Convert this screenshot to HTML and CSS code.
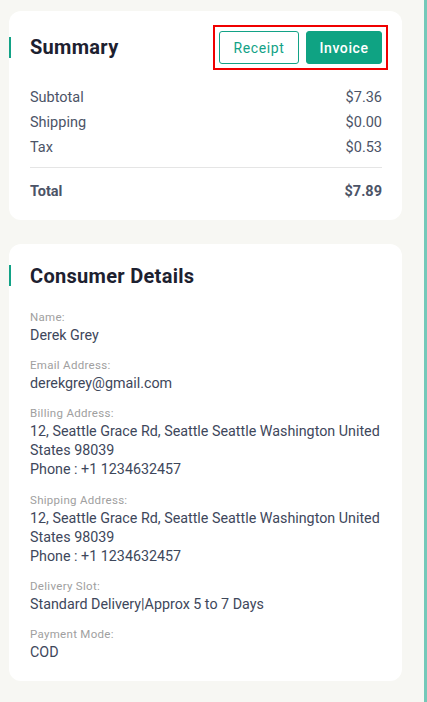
FILE: index.html
```html
<!DOCTYPE html>
<html lang="en">
<head>
<meta charset="utf-8">
<title>Order Summary</title>
<link rel="stylesheet" href="styles.css">
</head>
<body>
<div class="page">
  <main class="content">
    <section class="card summary">
      <div class="card-head">
        <h2 class="card-title">Summary</h2>
        <div class="actions">
          <button class="btn btn-outline">Receipt</button>
          <button class="btn btn-solid">Invoice</button>
        </div>
      </div>
      <div class="rows">
        <div class="row"><span>Subtotal</span><span>$7.36</span></div>
        <div class="row"><span>Shipping</span><span>$0.00</span></div>
        <div class="row"><span>Tax</span><span>$0.53</span></div>
      </div>
      <div class="row total"><span>Total</span><span>$7.89</span></div>
    </section>

    <section class="card details">
      <h2 class="card-title">Consumer Details</h2>
      <dl class="fields">
        <div class="field">
          <dt>Name:</dt>
          <dd>Derek Grey</dd>
        </div>
        <div class="field">
          <dt>Email Address:</dt>
          <dd>derekgrey@gmail.com</dd>
        </div>
        <div class="field">
          <dt>Billing Address:</dt>
          <dd>12, Seattle Grace Rd, Seattle Seattle Washington United States 98039<br>Phone : +1 1234632457</dd>
        </div>
        <div class="field">
          <dt>Shipping Address:</dt>
          <dd>12, Seattle Grace Rd, Seattle Seattle Washington United States 98039<br>Phone : +1 1234632457</dd>
        </div>
        <div class="field">
          <dt>Delivery Slot:</dt>
          <dd>Standard Delivery|Approx 5 to 7 Days</dd>
        </div>
        <div class="field">
          <dt>Payment Mode:</dt>
          <dd>COD</dd>
        </div>
      </dl>
    </section>
  </main>
  <div class="edge"></div>
</div>
</body>
</html>
```

FILE: styles.css
```css
* { box-sizing: border-box; }

html, body {
  margin: 0;
  padding: 0;
  background: #f7f7f3;
}

body {
  font-family: Roboto, "Liberation Sans", Arial, sans-serif;
  color: #4a5264;
}

.page {
  display: flex;
  min-height: 100vh;
}

.content {
  flex: 1;
  padding: 11px 22px 20px 9px;
  display: flex;
  flex-direction: column;
  gap: 24px;
}

.edge {
  width: 3px;
  background: #74c9b9;
}

.card {
  background: #ffffff;
  border-radius: 12px;
  padding: 0 20px 0 21px;
}

.summary {
  padding-top: 20px;
  padding-bottom: 16px;
}

.details {
  padding-top: 21px;
  padding-bottom: 19px;
}

.card-title {
  margin: 0 0 0 -21px;
  padding-left: 19px;
  border-left: 2px solid #12a286;
  font-size: 20px;
  line-height: 21px;
  font-weight: 700;
  letter-spacing: 0.3px;
  color: #1d2130;
}

.details .card-title {
  padding-top: 1px;
  line-height: 20px;
}

.card-head {
  display: flex;
  align-items: center;
  justify-content: space-between;
}

.actions {
  display: flex;
  gap: 7px;
  outline: 2px solid #f00000;
  outline-offset: 4px;
}

.btn {
  font-family: inherit;
  font-size: 14px;
  height: 33px;
  border-radius: 3px;
  padding: 0;
  cursor: pointer;
  letter-spacing: 0.6px;
}

.btn-outline {
  background: #fff;
  border: 1px solid #12a286;
  color: #12a286;
  width: 80px;
}

.btn-solid {
  background: #0fa383;
  border: 1px solid #0fa383;
  color: #ffffff;
  font-weight: 500;
  width: 76px;
}

.rows {
  margin-top: 21px;
  padding-bottom: 7px;
  border-bottom: 1px solid #e5e5e5;
}

.row {
  display: flex;
  justify-content: space-between;
  font-size: 14.5px;
  line-height: 25px;
  color: #4c5467;
}

.total {
  margin-top: 11px;
  font-weight: 700;
}

.fields {
  margin: 24px 0 0;
  display: flex;
  flex-direction: column;
  gap: 13.2px;
}

.field dt {
  font-size: 11.5px;
  line-height: 15px;
  letter-spacing: 0.3px;
  color: #a0a0a0;
}

.field dd {
  margin: 1px 0 0;
  font-size: 14.3px;
  line-height: 19px;
  color: #3e475b;
}
```
